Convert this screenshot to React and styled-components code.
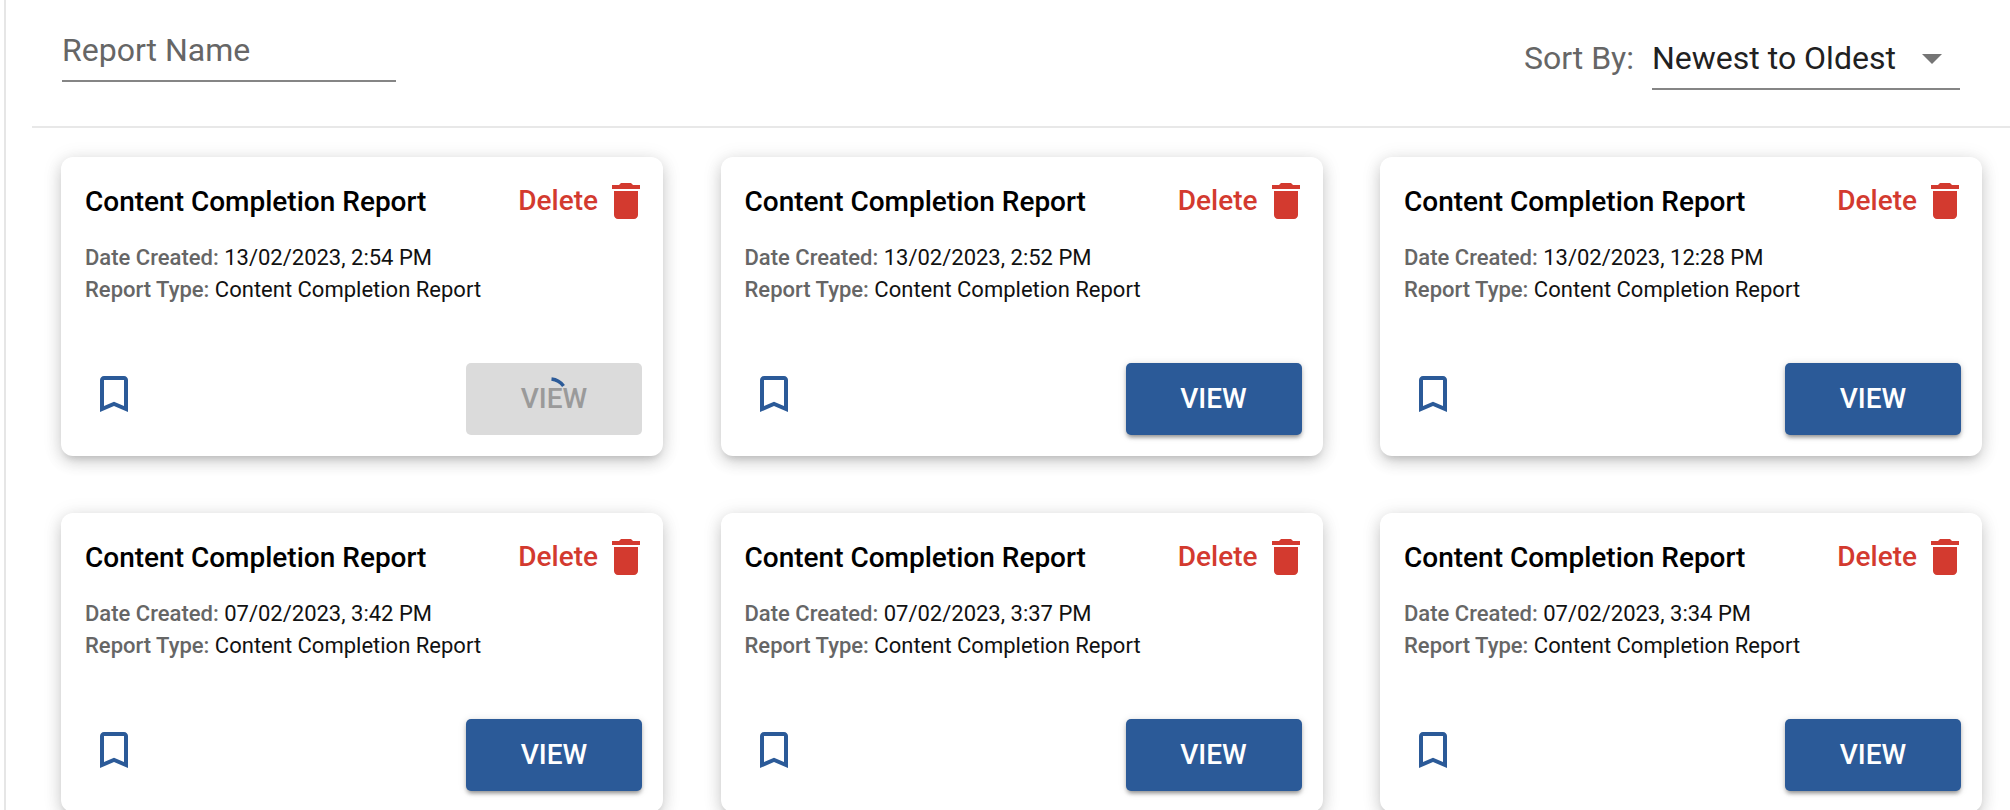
import React from "react";
import styled, { createGlobalStyle } from "styled-components";

const GlobalStyle = createGlobalStyle`
  html, body {
    margin: 0;
    height: 100%;
    overflow: hidden;
    background: #fff;
    font-family: Roboto, "Liberation Sans", sans-serif;
  }
`;

const Page = styled.div`
  box-sizing: border-box;
  height: 810px;
  margin-left: 4px;
  border-left: 2px solid #e6e6e6;
  overflow: hidden;
`;

// Search and sort controls
const Toolbar = styled.div`
  box-sizing: border-box;
  height: 128px;
  margin-left: 26px;
  padding: 0 50px 0 30px;
  display: flex;
  justify-content: space-between;
  border-bottom: 2px solid #e8e8e8;
`;

const SearchField = styled.div`
  box-sizing: border-box;
  width: 334px;
  height: 82px;
  padding-top: 31px;
  font-size: 32px;
  line-height: 38px;
  color: #666;
  border-bottom: 2px solid #858585;
`;

const SortGroup = styled.div`
  display: flex;
  align-items: flex-start;
  gap: 18px;
`;

const SortLabel = styled.span`
  padding-top: 39px;
  font-size: 32px;
  line-height: 38px;
  color: #666;
`;

const SortSelect = styled.div`
  box-sizing: border-box;
  width: 308px;
  height: 90px;
  padding: 39px 18px 0 0;
  display: flex;
  justify-content: space-between;
  font-size: 32px;
  line-height: 38px;
  color: #212121;
  border-bottom: 2px solid #858585;
`;

const Caret = styled.span`
  width: 0;
  height: 0;
  margin-top: 15px;
  border-left: 10px solid transparent;
  border-right: 10px solid transparent;
  border-top: 10px solid #757575;
`;

const CardGrid = styled.div`
  display: grid;
  grid-template-columns: repeat(3, 602px);
  gap: 57px 57.5px;
  padding: 29px 0 0 55px;
`;

const Card = styled.div`
  box-sizing: border-box;
  height: 299px;
  padding: 20px 21px 21px 24px;
  display: flex;
  flex-direction: column;
  background: #fff;
  border-radius: 12px;
  box-shadow: 0 6px 6px -4px rgba(0, 0, 0, 0.12), 0 6px 16px rgba(0, 0, 0, 0.14),
    0 2px 20px rgba(0, 0, 0, 0.1);
`;

const CardHeader = styled.div`
  display: flex;
  align-items: center;
  justify-content: space-between;
  height: 48px;
  margin-right: -8px;
`;

const CardTitle = styled.h3`
  margin: 0;
  padding-top: 2px;
  font-size: 28px;
  font-weight: 500;
  line-height: 46px;
  color: #000;
`;

const DeleteAction = styled.div`
  display: flex;
  align-items: center;
  gap: 4px;
  color: #d33a2f;
  font-size: 28px;
  font-weight: 500;
`;

const DeleteLabel = styled.span`
  margin-bottom: 2px;
`;

const CardDetails = styled.div`
  margin-top: 17px;
`;

const DetailRow = styled.div`
  font-size: 22px;
  line-height: 32px;
  color: #111;
`;

const DetailLabel = styled.span`
  font-weight: 500;
  color: #666;
`;

const CardFooter = styled.div`
  margin-top: auto;
  display: flex;
  align-items: flex-start;
  justify-content: space-between;
  padding-left: 5px;
`;

const BookmarkIcon = styled.svg`
  display: block;
  width: 48px;
  height: 48px;
  margin-top: 7px;
  fill: #2b5a98;
`;

const ViewButtonWrap = styled.div`
  position: relative;
`;

const ViewButton = styled.button`
  display: block;
  width: 176px;
  height: 72px;
  padding: 0 0 2px;
  border: 0;
  border-radius: 5px;
  font-family: inherit;
  font-size: 28px;
  font-weight: 500;
  color: ${(props) => (props.disabled ? "#9a9a9a" : "#fff")};
  background: ${(props) => (props.disabled ? "#dbdbdb" : "#2b5a98")};
  box-shadow: ${(props) =>
    props.disabled
      ? "none"
      : "0 4px 4px -2px rgba(0,0,0,0.3), 0 2px 4px rgba(0,0,0,0.14), 0 1px 8px rgba(0,0,0,0.12)"};
`;

const Spinner = styled.svg`
  position: absolute;
  left: 64px;
  top: 12px;
  width: 48px;
  height: 48px;
`;

const reports = [
  { date: "13/02/2023, 2:54 PM", loading: true },
  { date: "13/02/2023, 2:52 PM" },
  { date: "13/02/2023, 12:28 PM" },
  { date: "07/02/2023, 3:42 PM" },
  { date: "07/02/2023, 3:37 PM" },
  { date: "07/02/2023, 3:34 PM" },
];

const ReportCard = ({ date, loading }) => (
  <Card>
    <CardHeader>
      <CardTitle>Content Completion Report</CardTitle>
      <DeleteAction>
        <DeleteLabel>Delete</DeleteLabel>
        <svg width="48" height="48" viewBox="0 0 24 24" fill="#d33a2f">
          <path d="M6 19c0 1.1.9 2 2 2h8c1.1 0 2-.9 2-2V7H6v12zM19 4h-3.5l-1-1h-5l-1 1H5v2h14V4z" />
        </svg>
      </DeleteAction>
    </CardHeader>
    <CardDetails>
      <DetailRow>
        <DetailLabel>Date Created:</DetailLabel> {date}
      </DetailRow>
      <DetailRow>
        <DetailLabel>Report Type:</DetailLabel> Content Completion Report
      </DetailRow>
    </CardDetails>
    <CardFooter>
      <BookmarkIcon viewBox="0 0 24 24">
        <path d="M17 3H7c-1.1 0-1.99.9-1.99 2L5 21l7-3 7 3V5c0-1.1-.9-2-2-2zm0 15l-5-2.18L7 18V5h10v13z" />
      </BookmarkIcon>
      <ViewButtonWrap>
        <ViewButton disabled={loading}>VIEW</ViewButton>
        {loading && (
          <Spinner viewBox="0 0 48 48">
            <path d="M21.5 4 A17 17 0 0 1 33.5 11" fill="none" stroke="#2b5a98" strokeWidth="3.5" />
          </Spinner>
        )}
      </ViewButtonWrap>
    </CardFooter>
  </Card>
);

const App = () => (
  <>
    <GlobalStyle />
    <Page>
      <Toolbar>
        <SearchField>Report Name</SearchField>
        <SortGroup>
          <SortLabel>Sort By:</SortLabel>
          <SortSelect>
            Newest to Oldest
            <Caret />
          </SortSelect>
        </SortGroup>
      </Toolbar>
      <CardGrid>
        {reports.map((report) => (
          <ReportCard key={report.date} {...report} />
        ))}
      </CardGrid>
    </Page>
  </>
);

export default App;
